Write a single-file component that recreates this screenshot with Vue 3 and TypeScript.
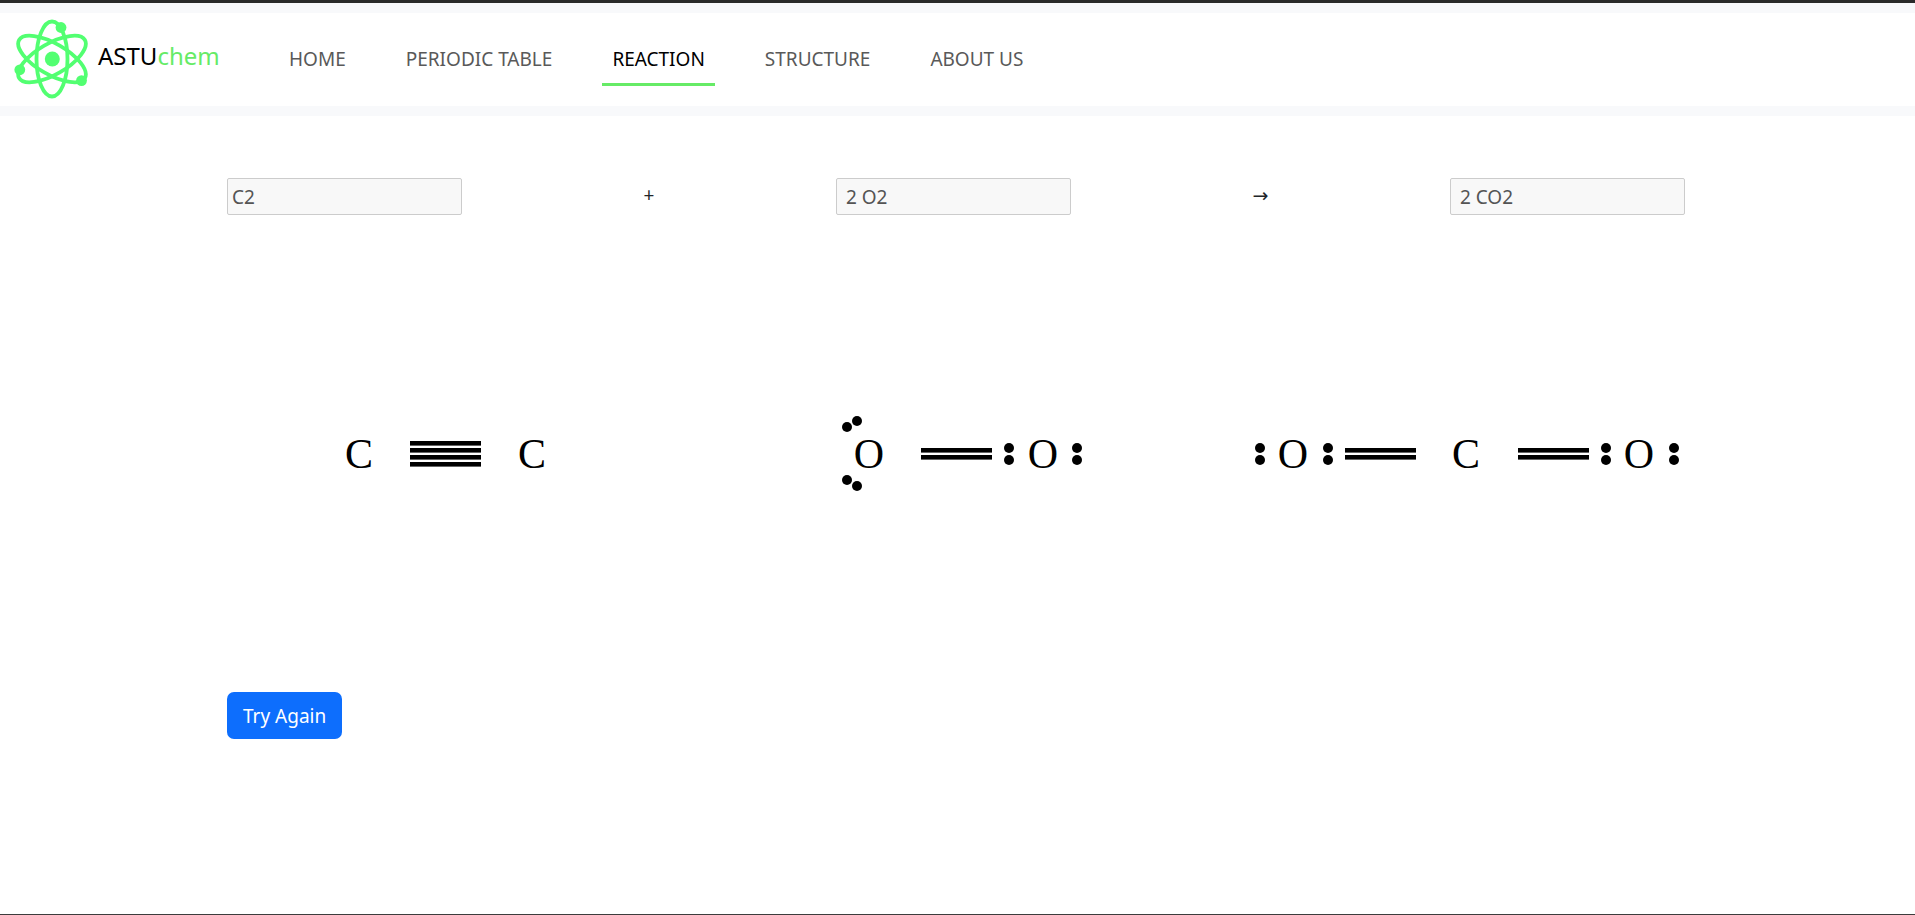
<script setup lang="ts">
interface NavLink { label: string; href: string; active?: boolean }
interface Atom { symbol: string; x: number }
interface Bond { x: number; y: number }
interface Electron { x: number; y: number }
interface Molecule { name: string; width: number; atoms: Atom[]; bonds: Bond[]; electrons: Electron[] }

const links: NavLink[] = [
  { label: 'HOME', href: '#home' },
  { label: 'PERIODIC TABLE', href: '#periodic-table' },
  { label: 'REACTION', href: '#reaction', active: true },
  { label: 'STRUCTURE', href: '#structure' },
  { label: 'ABOUT US', href: '#about' },
]

const bondLines = (x: number, order: number): Bond[] =>
  Array.from({ length: order }, (_, i) => ({ x, y: 51 - order * 3.5 + i * 7 }))

const pair = (x: number): Electron[] => [{ x, y: 44 }, { x, y: 56 }]

const molecules: Molecule[] = [
  {
    name: 'C2',
    width: 445,
    atoms: [{ symbol: 'C', x: 132 }, { symbol: 'C', x: 305 }],
    bonds: bondLines(183, 4),
    electrons: [],
  },
  {
    name: 'O2',
    width: 244,
    atoms: [{ symbol: 'O', x: 29 }, { symbol: 'O', x: 203 }],
    bonds: bondLines(81, 2),
    electrons: [
      { x: 7, y: 23 }, { x: 17, y: 17 }, { x: 7, y: 76 }, { x: 17, y: 82 },
      ...pair(169), ...pair(237),
    ],
  },
  {
    name: 'CO2',
    width: 433,
    atoms: [{ symbol: 'O', x: 41 }, { symbol: 'C', x: 214 }, { symbol: 'O', x: 387 }],
    bonds: [...bondLines(93, 2), ...bondLines(266, 2)],
    electrons: [...pair(8), ...pair(76), ...pair(354), ...pair(422)],
  },
]
</script>

<template>
  <div class="page">
    <header class="bar">
      <a class="brand" href="#home">
        <svg class="logo" width="76" height="84" viewBox="0 0 76 84" aria-hidden="true">
          <g fill="none" stroke="#52ff71" stroke-width="3.8">
            <ellipse cx="38" cy="41" rx="15.5" ry="37.5" />
            <ellipse cx="38" cy="41" rx="15.5" ry="38" transform="rotate(60 38 41)" />
            <ellipse cx="38" cy="41" rx="15.5" ry="38" transform="rotate(-60 38 41)" />
          </g>
          <g fill="#52ff71">
            <circle cx="38.3" cy="41" r="7.5" />
            <circle cx="47" cy="9.5" r="5.4" />
            <circle cx="5.8" cy="51.8" r="5.4" />
            <circle cx="67.5" cy="62.6" r="5.4" />
          </g>
        </svg>
        <span class="title">ASTU<span class="accent">chem</span></span>
      </a>
      <nav class="nav">
        <a v-for="link in links" :key="link.label" :href="link.href" :class="{ active: link.active }">{{ link.label }}</a>
      </nav>
    </header>

    <main class="content">
      <div class="equation">
        <input value="C2" aria-label="First reactant" disabled>
        <span class="sign">+</span>
        <input value=" 2 O2" aria-label="Second reactant" disabled>
        <span class="sign arrow">→</span>
        <input value=" 2 CO2" aria-label="Product" disabled>
      </div>

      <div class="molecules">
        <svg
          v-for="m in molecules" :key="m.name" :width="m.width" height="100"
          :viewBox="`0 0 ${m.width} 100`" role="img" :aria-label="m.name"
        >
          <rect v-for="(b, i) in m.bonds" :key="`b${i}`" :x="b.x" :y="b.y" width="71" height="4.6" />
          <circle v-for="(e, i) in m.electrons" :key="`e${i}`" :cx="e.x" :cy="e.y" r="5" />
          <text v-for="(a, i) in m.atoms" :key="`a${i}`" :x="a.x" y="64">{{ a.symbol }}</text>
        </svg>
      </div>

      <button class="retry" type="button">Try Again</button>
    </main>
  </div>
</template>

<style>
body { margin: 0; background: #fff; }
</style>

<style scoped>
.page {
  box-sizing: border-box;
  min-height: 100vh;
  border-top: 3px solid #2a2a2a;
  border-bottom: 1px solid #3c3c3c;
  font-family: "Segoe UI", "Noto Sans", sans-serif;
  font-size: 19px;
  line-height: 30px;
  color: #212529;
}
.bar {
  display: flex;
  align-items: center;
  height: 93px;
  padding-left: 14px;
  border-top: 10px solid #f8f9fb;
  border-bottom: 10px solid #f8f9fb;
}
.brand {
  display: flex;
  align-items: center;
  gap: 8px;
  width: 265px;
  color: #000;
  text-decoration: none;
}
.title { font-size: 24px; padding-bottom: 8px; }
.accent { color: #66eb66; }
.nav { display: flex; gap: 40px; }
.nav a {
  padding: 11px 10px 9px;
  border-bottom: 3px solid transparent;
  color: #595959;
  text-decoration: none;
}
.nav a.active { color: #000; border-bottom-color: #66eb66; }
.content { padding: 62px 230px 0 227px; }
.equation {
  display: flex;
  justify-content: space-between;
}
.equation input {
  box-sizing: border-box;
  width: 235px;
  height: 37px;
  padding: 0 4px;
  border: 1px solid #ccc;
  border-radius: 2px;
  background: #f8f8f8;
  color: #545454;
  font: inherit;
}
.sign { line-height: 34px; }
.arrow { font-family: "DejaVu Sans", sans-serif; }
.molecules {
  display: flex;
  justify-content: space-between;
  margin-top: 189px;
}
.molecules text {
  font-family: "Liberation Serif", serif;
  font-size: 42px;
  text-anchor: middle;
}
.molecules svg { fill: #000; }
.retry {
  display: block;
  height: 47px;
  margin-top: 188px;
  padding: 0 16px;
  border: 0;
  border-radius: 7px;
  background: #0d6efd;
  color: #fff;
  font: inherit;
}
</style>
